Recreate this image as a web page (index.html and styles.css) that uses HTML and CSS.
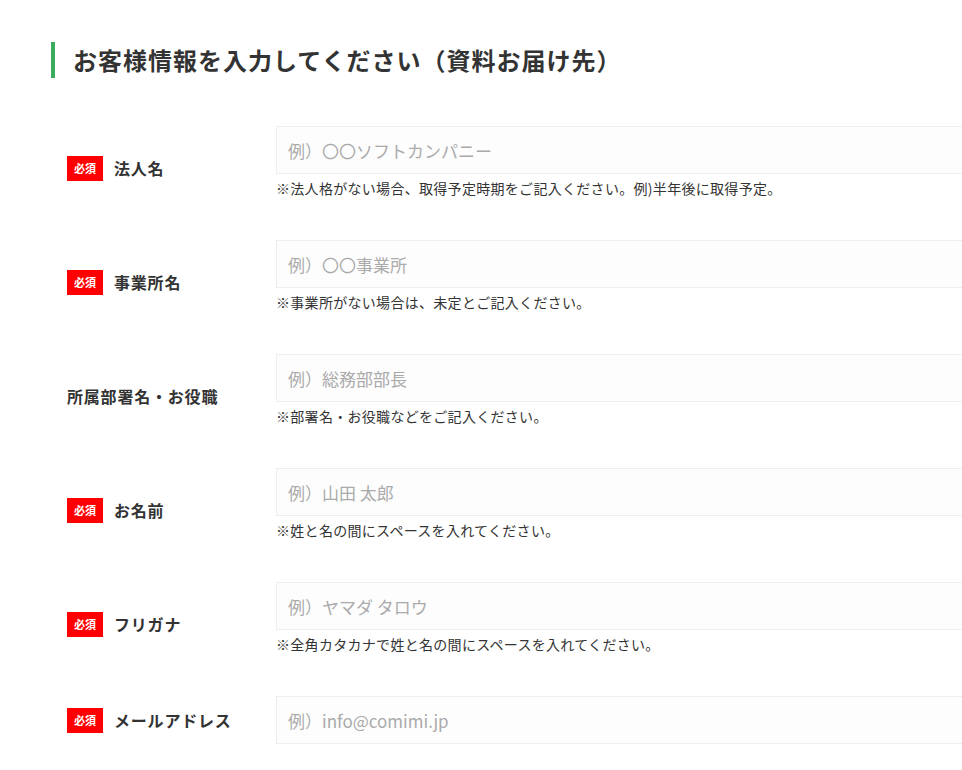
FILE: index.html
```html
<!DOCTYPE html>
<html lang="ja">
<head>
<meta charset="utf-8">
<link rel="stylesheet" href="styles.css">
</head>
<body>
<section class="section">
  <h2 class="title">お客様情報を入力してください（資料お届け先）</h2>
  <div class="form">
    <div class="row">
      <div class="label"><span class="badge">必須</span><span class="name">法人名</span></div>
      <div class="field">
        <input class="input" type="text" placeholder="例）〇〇ソフトカンパニー">
        <p class="note">※法人格がない場合、取得予定時期をご記入ください。例)半年後に取得予定。</p>
      </div>
    </div>
    <div class="row">
      <div class="label"><span class="badge">必須</span><span class="name">事業所名</span></div>
      <div class="field">
        <input class="input" type="text" placeholder="例）〇〇事業所">
        <p class="note">※事業所がない場合は、未定とご記入ください。</p>
      </div>
    </div>
    <div class="row">
      <div class="label"><span class="name">所属部署名・お役職</span></div>
      <div class="field">
        <input class="input" type="text" placeholder="例）総務部部長">
        <p class="note">※部署名・お役職などをご記入ください。</p>
      </div>
    </div>
    <div class="row">
      <div class="label"><span class="badge">必須</span><span class="name">お名前</span></div>
      <div class="field">
        <input class="input" type="text" placeholder="例）山田 太郎">
        <p class="note">※姓と名の間にスペースを入れてください。</p>
      </div>
    </div>
    <div class="row">
      <div class="label"><span class="badge">必須</span><span class="name">フリガナ</span></div>
      <div class="field">
        <input class="input" type="text" placeholder="例）ヤマダ タロウ">
        <p class="note">※全角カタカナで姓と名の間にスペースを入れてください。</p>
      </div>
    </div>
    <div class="row">
      <div class="label"><span class="badge">必須</span><span class="name">メールアドレス</span></div>
      <div class="field">
        <input class="input" type="text" placeholder="例）info@comimi.jp">
      </div>
    </div>
  </div>
</section>
</body>
</html>
```
FILE: styles.css
```css
html, body {
  margin: 0;
  padding: 0;
  overflow: hidden;
  background: #fff;
}
body {
  font-family: "Noto Sans CJK JP", "Noto Sans", sans-serif;
  color: #333;
}
.section {
  padding: 42px 0 0 51px;
}
.title {
  margin: 0;
  border-left: 4px solid #3bab5e;
  padding-left: 18px;
  font-size: 24px;
  line-height: 36px;
  font-weight: 700;
  letter-spacing: 1px;
  color: #333;
}
.form {
  margin-top: 48px;
  display: flex;
  flex-direction: column;
  gap: 30px;
}
.row {
  display: flex;
  align-items: center;
  padding-left: 16px;
}
.label {
  width: 209px;
  flex: none;
  display: flex;
  align-items: center;
  gap: 11px;
}
.badge {
  width: 36px;
  height: 25px;
  background: #f00;
  color: #fff;
  font-size: 11px;
  font-weight: 700;
  display: flex;
  align-items: center;
  justify-content: center;
}
.name {
  font-size: 16px;
  font-weight: 700;
  letter-spacing: 0.8px;
  color: #333;
}
.field {
  width: 720px;
  flex: none;
}
.input {
  display: block;
  box-sizing: border-box;
  width: 100%;
  height: 48px;
  margin: 0;
  border: 1px solid #eee;
  background: #fdfdfd;
  padding: 0 11px;
  font-family: inherit;
  font-size: 17px;
  color: #333;
  outline: none;
}
.input::placeholder {
  color: #aaa;
}
.note {
  margin: 4px 0 0;
  padding-bottom: 12px;
  font-size: 14px;
  line-height: 20px;
  letter-spacing: 0.3px;
  color: #333;
}
```
